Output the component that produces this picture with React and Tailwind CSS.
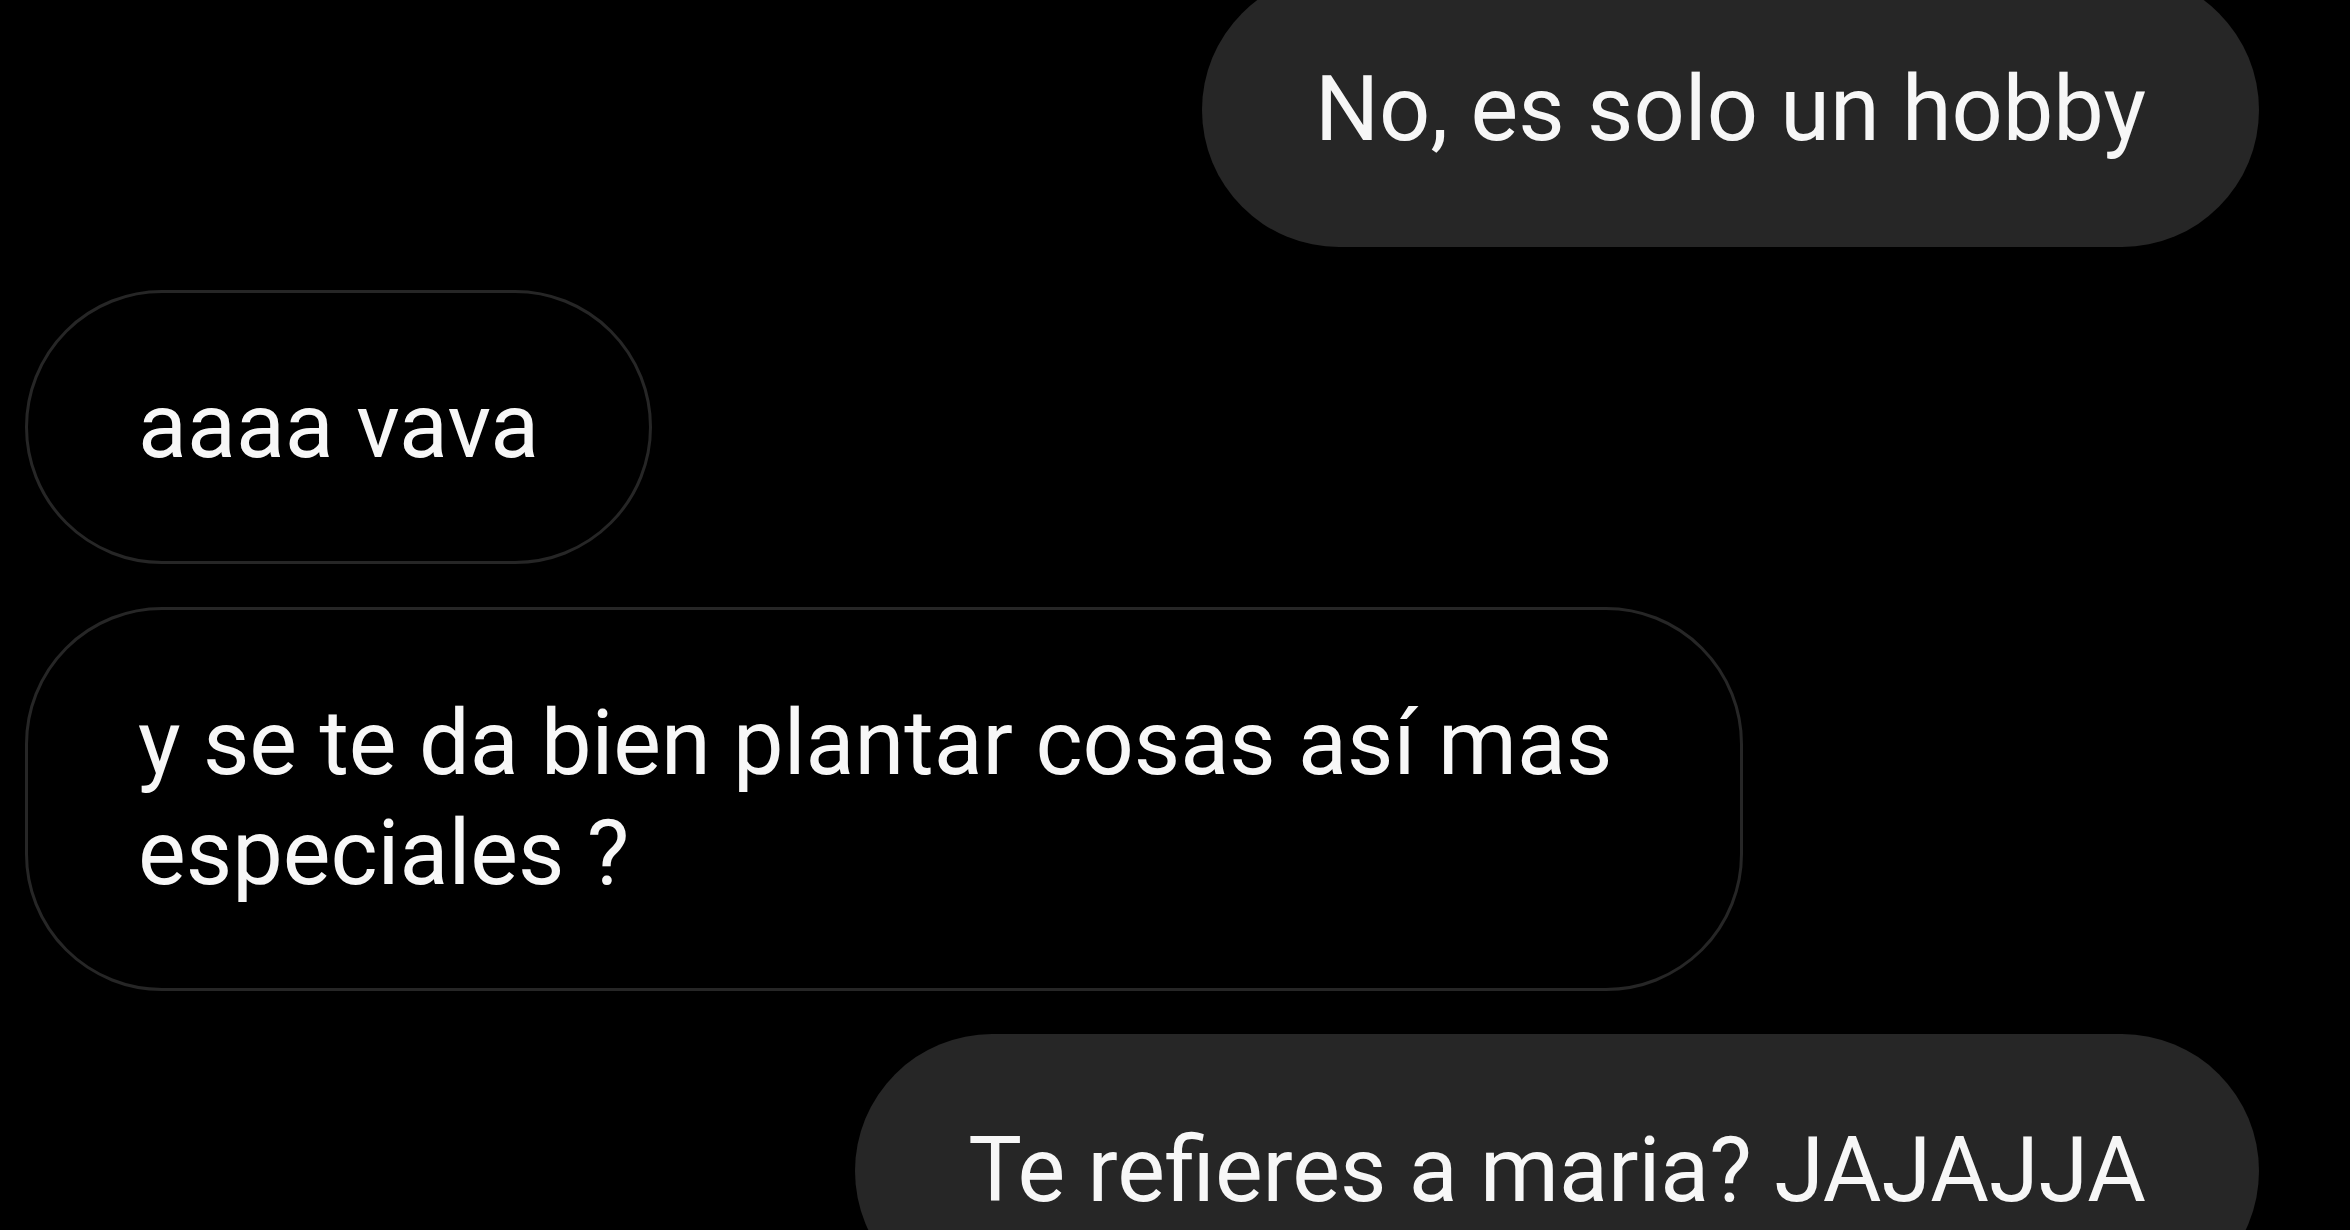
const MESSAGES = [
  { id: 1, mine: true, text: "No, es solo un hobby" },
  { id: 2, mine: false, text: "aaaa vava" },
  {
    id: 3,
    mine: false,
    lines: ["y se te da bien plantar cosas así mas", "especiales ?"],
    wide: true,
  },
  { id: 4, mine: true, text: "Te refieres a maria? JAJAJJA" },
];

const Bubble = ({ mine, text, lines, wide }) => (
  <div className={`flex ${mine ? "justify-end" : "justify-start"}`}>
    <div
      className={`rounded-[137px] px-[110px] py-[79px] text-[90px] leading-[110px] text-[#f7f7f7] whitespace-nowrap
        ${mine ? "bg-[#262626] border-[3px] border-transparent" : "bg-black border-[3px] border-[#262626]"}
        ${wide ? "w-[1718px]" : ""}`}
    >
      {lines
        ? lines.map((l, i) => <div key={i}>{l}</div>)
        : text}
    </div>
  </div>
);

export default function App() {
  return (
    <div
      className="w-[2350px] h-[1230px] overflow-hidden bg-black"
      style={{ fontFamily: "Roboto, 'Noto Sans', sans-serif" }}
    >
      <div className="flex flex-col gap-[43px] -mt-[27px] pl-[25px] pr-[91px]">
        {MESSAGES.map((m) => (
          <Bubble key={m.id} {...m} />
        ))}
      </div>
    </div>
  );
}
